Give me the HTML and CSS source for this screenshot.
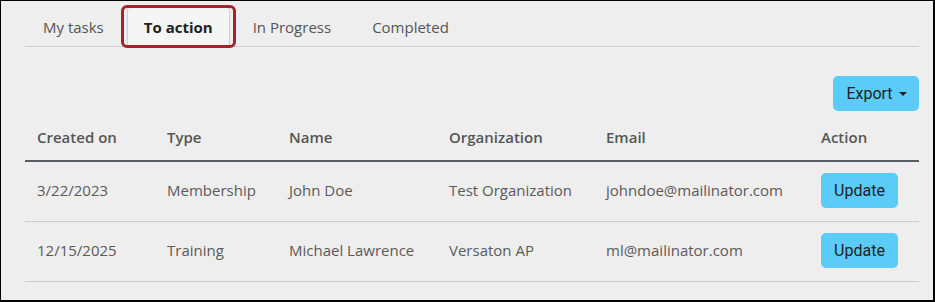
FILE: index.html
```html
<!DOCTYPE html>
<html lang="en">
<head>
  <meta charset="UTF-8">
  <meta name="viewport" content="width=device-width, initial-scale=1.0">
  <title>Tasks</title>
  <link rel="stylesheet" href="styles.css">
</head>
<body>
  <div class="frame">
    <ul class="tabs">
      <li class="tab">My tasks</li>
      <li class="tab active">To action</li>
      <li class="tab">In Progress</li>
      <li class="tab">Completed</li>
    </ul>
    <div class="toolbar">
      <button class="btn export-btn">Export <span class="caret"></span></button>
    </div>
    <table class="task-table">
      <colgroup>
        <col style="width:130px">
        <col style="width:122px">
        <col style="width:160px">
        <col style="width:157px">
        <col style="width:215px">
        <col style="width:110px">
      </colgroup>
      <thead>
        <tr>
          <th>Created on</th>
          <th>Type</th>
          <th>Name</th>
          <th>Organization</th>
          <th>Email</th>
          <th>Action</th>
        </tr>
      </thead>
      <tbody>
        <tr>
          <td>3/22/2023</td>
          <td>Membership</td>
          <td>John Doe</td>
          <td>Test Organization</td>
          <td>johndoe@mailinator.com</td>
          <td><button class="btn">Update</button></td>
        </tr>
        <tr>
          <td>12/15/2025</td>
          <td>Training</td>
          <td>Michael Lawrence</td>
          <td>Versaton AP</td>
          <td>ml@mailinator.com</td>
          <td><button class="btn">Update</button></td>
        </tr>
      </tbody>
    </table>
  </div>
</body>
</html>
```
FILE: styles.css
```css
/* Dasar */
* {
  box-sizing: border-box;
  margin: 0;
  padding: 0;
}
body {
  background: #eeeeee;
  font-family: 'Open Sans', sans-serif;
  color: #555;
}
.frame {
  width: 935px;
  height: 302px;
  border: 1px solid #000;
  border-right-width: 2px;
  border-bottom-width: 2px;
  padding: 0 14px 0 24px;
  background: #eeeeee;
}
/* Tabs */
.tabs {
  list-style: none;
  display: flex;
  gap: 5px;
  margin-top: 6px;
  border-bottom: 1px solid #cfcfcf;
}
.tab {
  height: 39px;
  line-height: 38px;
  padding: 1px 18px 0;
  font-size: 15px;
  color: #555;
}
.tab.active {
  position: relative;
  background: #f5f5f5;
  border: 1px solid #d0d0d0;
  border-bottom: none;
  border-radius: 3px 3px 0 0;
  color: #222;
  font-weight: 700;
  padding: 1px 16px 0;
  line-height: 37px;
  margin-bottom: -1px;
  height: 39px;
}
/* Kotak sorotan merah */
.tab.active::after {
  content: '';
  position: absolute;
  left: -7px;
  right: -7px;
  top: -3px;
  bottom: -2px;
  border: 3px solid #a8222c;
  border-radius: 6px;
}
/* Tombol */
.toolbar {
  display: flex;
  justify-content: flex-end;
  margin-top: 29px;
}
.btn {
  font-family: Roboto, sans-serif;
  font-size: 16px;
  color: #222;
  background: #5bcbf8;
  border: none;
  border-radius: 5px;
  height: 35px;
  padding: 0 11px;
}
.export-btn {
  width: 86px;
  padding: 0 0 0 1px;
  display: flex;
  align-items: center;
  justify-content: center;
  gap: 6px;
}
.caret {
  width: 0;
  height: 0;
  border-left: 4px solid transparent;
  border-right: 4px solid transparent;
  border-top: 4px solid #222;
  margin-top: 1px;
}
/* Tabel */
.task-table {
  width: 894px;
  border-collapse: collapse;
  table-layout: fixed;
  margin-top: 4px;
  font-size: 15px;
}
.task-table th {
  text-align: left;
  font-weight: 600;
  color: #555;
  padding: 0 12px 1px;
  height: 46px;
  border-bottom: 2px solid #555c66;
}
.task-table td {
  padding: 0 12px 2px;
  height: 60px;
  border-bottom: 1px solid #cccccc;
  color: #5a5a5a;
  white-space: nowrap;
}
.task-table td .btn {
  width: 77px;
  padding: 0;
}
```
